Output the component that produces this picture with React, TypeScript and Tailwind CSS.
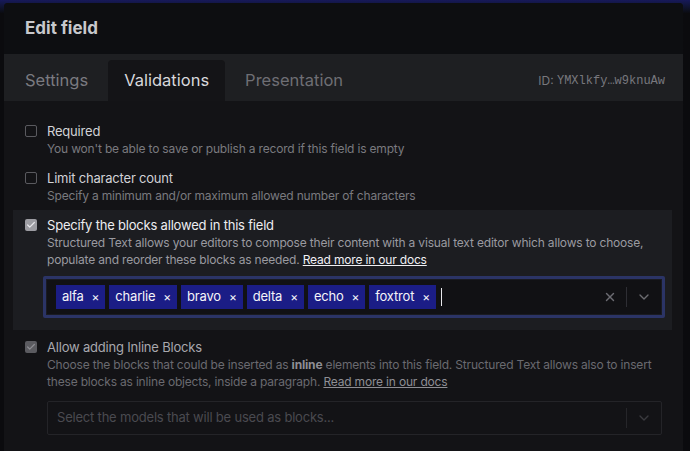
import { X, ChevronDown, Check } from 'lucide-react';

const chips = ['alfa', 'charlie', 'bravo', 'delta', 'echo', 'foxtrot'];

function Box({ checked, dim }: { checked?: boolean; dim?: boolean }) {
  if (!checked) {
    return <div className="w-[12px] h-[12px] mt-[3px] rounded-[2px] border-[1.5px] border-[#5a5a5f] flex-shrink-0" />;
  }
  return (
    <div
      className={`w-[12px] h-[12px] mt-[3px] rounded-[2px] flex items-center justify-center flex-shrink-0 ${dim ? 'bg-[#5b5b60]' : 'bg-[#9c9ca2]'}`}
    >
      <Check className={`w-[10px] h-[10px] ${dim ? 'text-[#8d8d92]' : 'text-[#e6e6ea]'}`} strokeWidth={3} />
    </div>
  );
}

function Row({ label, desc }: { label: string; desc: string }) {
  return (
    <div className="flex gap-[10px] px-[12px] py-[6px]">
      <Box />
      <div>
        <p className="text-[13px] leading-[18px] tracking-[-0.2px] text-[#d2d2d6]">{label}</p>
        <p className="text-[12px] leading-[17px] tracking-[-0.18px] text-[#7a7a7f]">{desc}</p>
      </div>
    </div>
  );
}

export default function App() {
  return (
    <div
      className="w-[690px] h-[451px] overflow-hidden bg-[#0b0b0e] pt-[3px] pl-[4px] pr-[7px] bg-gradient-to-b from-[#17195a] to-[#0b0b0e] to-[3%]"
      style={{ fontFamily: 'Inter, "Noto Sans", sans-serif' }}
    >
      <div className="w-[679px] h-[448px] rounded-t-[4px] overflow-hidden bg-[#131316] flex flex-col">
        {/* Header */}
        <div className="h-[51px] px-[21px] flex items-center bg-[#0d0e11]">
          <h1 className="text-[17px] font-bold text-[#c8c8cc]">Edit field</h1>
        </div>

        {/* Tabs */}
        <div className="h-[47px] bg-[#1e1f22] flex items-end pl-[5px] pr-[18px]">
          <div className="flex gap-[4px] flex-1">
            <div className="h-[41px] px-[16px] flex items-center text-[16.5px] text-[#7a7a80]">Settings</div>
            <div className="h-[41px] px-[16px] flex items-center text-[16.5px] text-[#d8d8dc] bg-[#141417] rounded-t-[4px]">Validations</div>
            <div className="h-[41px] px-[16px] flex items-center text-[16.5px] text-[#6e6e74]">Presentation</div>
          </div>
          <div className="h-[41px] flex items-center text-[12px] text-[#78787e]">
            <span>ID:&nbsp;</span>
            <span style={{ fontFamily: '"Liberation Mono", monospace' }}>YMXlkfy…w9knuAw</span>
          </div>
        </div>

        {/* Content */}
        <div className="pt-[15px] pl-[9px] pr-[11px]">
          <Row label="Required" desc="You won't be able to save or publish a record if this field is empty" />
          <Row label="Limit character count" desc="Specify a minimum and/or maximum allowed number of characters" />

          <div className="bg-[#1c1d21] flex gap-[10px] px-[12px] pt-[6px] pb-[12px]">
            <Box checked />
            <div className="flex-1">
              <p className="text-[13px] leading-[18px] tracking-[-0.2px] text-[#ececf0]">Specify the blocks allowed in this field</p>
              <p className="text-[12px] leading-[17px] tracking-[-0.18px] text-[#9a9aa0]">
                Structured Text allows your editors to compose their content with a visual text editor which allows to choose, populate and reorder these blocks as needed.{' '}
                <span className="underline text-[#f0f0f4]">Read more in our docs</span>
              </p>
              <div className="mt-[8px] -ml-[4px] -mr-[5px] p-[3px] bg-[#2b3466] rounded-[2px]">
                <div className="h-[36px] bg-[#111114] border border-[#1a1b22] flex items-center pl-[9px] pr-[9px]">
                  <div className="flex gap-[4px] items-center flex-1">
                    {chips.map(c => (
                      <div key={c} className="h-[24px] bg-[#1b1d86] flex items-center text-[13px] tracking-[-0.2px] text-[#f4f4f8]">
                        <span className="pl-[6px] pr-[3px]">{c}</span>
                        <span className="pl-[5px] pr-[6px] text-[12px]">×</span>
                      </div>
                    ))}
                    <div className="w-[1px] h-[18px] bg-[#e8e8ec] ml-[1px]" />
                  </div>
                  <X className="w-[14px] h-[14px] text-[#6c6c72]" strokeWidth={2.5} />
                  <div className="w-[1px] h-[20px] bg-[#2e2e34] mx-[9px]" />
                  <ChevronDown className="w-[16px] h-[16px] text-[#6c6c72]" strokeWidth={2} />
                </div>
              </div>
            </div>
          </div>

          <div className="flex gap-[10px] px-[12px] pt-[8px]">
            <Box checked dim />
            <div className="flex-1">
              <p className="text-[13px] leading-[18px] tracking-[-0.2px] text-[#a8a8ae]">Allow adding Inline Blocks</p>
              <p className="text-[12px] leading-[17px] tracking-[-0.18px] text-[#6a6a70]">
                Choose the blocks that could be inserted as <b className="text-[#8e8e94]">inline</b> elements into this field. Structured Text allows also to insert these blocks as inline objects, inside a paragraph.{' '}
                <span className="underline text-[#8e8e94]">Read more in our docs</span>
              </p>
              <div className="mt-[11px] -mr-[2px] h-[34px] border border-[#242428] rounded-[2px] flex items-center pl-[9px] pr-[9px]">
                <span className="flex-1 text-[13px] tracking-[-0.2px] text-[#4a4a50]">Select the models that will be used as blocks...</span>
                <div className="w-[1px] h-[20px] bg-[#26262a] mx-[9px]" />
                <ChevronDown className="w-[16px] h-[16px] text-[#3a3a3f]" strokeWidth={2} />
              </div>
            </div>
          </div>
        </div>
      </div>
    </div>
  );
}
